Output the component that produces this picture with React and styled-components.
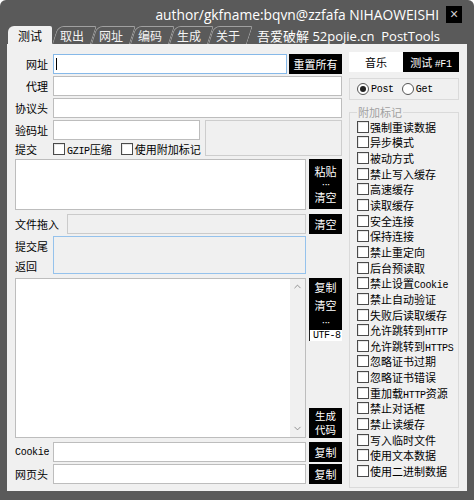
import React from 'react';
import styled, { createGlobalStyle } from 'styled-components';
import { ChevronUp, ChevronDown } from 'lucide-react';

const CJK = `"Noto Sans CJK SC", "Microsoft YaHei", sans-serif`;
const MONO = `"Liberation Mono", "Noto Sans CJK SC", monospace`;

const GlobalStyle = createGlobalStyle`
  html, body { margin: 0; padding: 0; background: #fff; }
  body { font-family: ${CJK}; font-size: 11px; color: #000; }
  * { box-sizing: border-box; }
`;

const tabs = ['测试', '取出', '网址', '编码', '生成', '关于'];

const flags = [
  '强制重读数据', '异步模式', '被动方式', '禁止写入缓存', '高速缓存', '读取缓存',
  '安全连接', '保持连接', '禁止重定向', '后台预读取', '禁止设置Cookie', '禁止自动验证',
  '失败后读取缓存', '允许跳转到HTTP', '允许跳转到HTTPS', '忽略证书过期', '忽略证书错误',
  '重加载HTTP资源', '禁止对话框', '禁止读缓存', '写入临时文件', '使用文本数据', '使用二进制数据',
];

// split ascii runs so they get the narrow bitmap-ish mono look; wrapped in one span
// so both fonts share a baseline
const mixed = (text) => (
  <span>
    {text.split(/([A-Za-z0-9#\-]+)/).filter(Boolean).map((part, i) =>
      /[A-Za-z0-9#]/.test(part) ? <Latin key={i}>{part}</Latin> : part
    )}
  </span>
);

function App() {
  return (
    <>
      <GlobalStyle />
      <Window>
        <TitleRow>
          <Title>author/gkfname:bqvn@zzfafa NIHAOWEISHI</Title>
          <Close>×</Close>
        </TitleRow>
        <TabRow>
          <Tabs>
            {tabs.map((t, i) => (
              <Tab key={t} $active={i === 0}>{t}</Tab>
            ))}
          </Tabs>
          <SubTitle>吾爱破解 52pojie.cn&nbsp;&nbsp;PostTools</SubTitle>
        </TabRow>

        <Panel>
          <LeftCol>
            <Row $cols="38px 1fr 55px" $h={20}>
              <Label $right>网址</Label>
              <Field $tone="blue"><Caret /></Field>
              <BlackBtn $ml={2}>重置所有</BlackBtn>
            </Row>
            <Row $cols="38px 1fr" $h={20} $mt={2}>
              <Label $right>代理</Label>
              <Field />
            </Row>
            <Row $cols="38px 1fr" $h={20} $mt={2}>
              <Label $right>协议头</Label>
              <Field />
            </Row>

            <CaptchaBlock>
              <Label $right>验码址</Label>
              <Field />
              <CaptchaImage />
              <Label>提交</Label>
              <Options>
                <CheckItem><Check />{mixed('GZIP压缩')}</CheckItem>
                <CheckItem><Check />使用附加标记</CheckItem>
              </Options>
            </CaptchaBlock>

            <Row $cols="1fr 36px" $h={51} $mt={1}>
              <Field />
              <BlackBtn $h={50}>
                <span>粘贴</span>
                <Dots>···</Dots>
                <span>清空</span>
              </BlackBtn>
            </Row>

            <Row $cols="52px 1fr 36px" $h={20} $mt={4}>
              <Label>文件拖入</Label>
              <Field $tone="gray" />
              <BlackBtn>清空</BlackBtn>
            </Row>

            <Row $cols="38px 1fr 36px" $h={38} $mt={2}>
              <LabelStack>
                <span>提交尾</span>
                <span>返回</span>
              </LabelStack>
              <Field $tone="blueGray" />
              <span />
            </Row>

            <Row $cols="1fr 36px" $h={160} $mt={4}>
              <Field $flex>
                <TextBody />
                <ScrollTrack>
                  <ChevronUp size={11} strokeWidth={1.6} color="#707070" />
                  <ChevronDown size={11} strokeWidth={1.6} color="#707070" />
                </ScrollTrack>
              </Field>
              <SideStack>
                <BlackBtn $h={52} $gap={4}>
                  <span>复制</span>
                  <span>清空</span>
                  <Dots>···</Dots>
                </BlackBtn>
                <Encoding>UTF-8</Encoding>
                <Spacer />
                <BlackBtn $h={30} $tight>
                  <span>生成</span>
                  <span>代码</span>
                </BlackBtn>
              </SideStack>
            </Row>

            <Row $cols="38px 1fr 36px" $h={20} $mt={4}>
              <Label><Latin>Cookie</Latin></Label>
              <Field />
              <BlackBtn>复制</BlackBtn>
            </Row>
            <Row $cols="38px 1fr 36px" $h={20} $mt={2}>
              <Label>网页头</Label>
              <Field />
              <BlackBtn>复制</BlackBtn>
            </Row>
          </LeftCol>

          <RightCol>
            <Segment>
              <SegBtn>音乐</SegBtn>
              <SegBtn $dark><span>测试 <Latin>#F1</Latin></span></SegBtn>
            </Segment>
            <RadioBox>
              <RadioItem><Radio $on /><Latin>Post</Latin></RadioItem>
              <RadioItem><Radio /><Latin>Get</Latin></RadioItem>
            </RadioBox>
            <Group>
              <Legend>附加标记</Legend>
              <FlagList>
                {flags.map((f) => (
                  <FlagItem key={f}><Check />{mixed(f)}</FlagItem>
                ))}
              </FlagList>
            </Group>
          </RightCol>
        </Panel>
      </Window>
    </>
  );
}

const Window = styled.div`
  width: 474px;
  height: 500px;
  background: #5a5a5a;
  border-radius: 6px 6px 0 0;
  display: flex;
  flex-direction: column;
  overflow: hidden;
`;

const TitleRow = styled.div`
  height: 26px;
  display: flex;
  align-items: center;
  justify-content: flex-end;
  gap: 7px;
  padding: 3px 12px 0 0;
`;

const Title = styled.div`
  font-family: "Open Sans", "Liberation Sans", sans-serif;
  font-size: 13.8px;
  color: #fff;
  white-space: nowrap;
`;

const Close = styled.div`
  width: 16px;
  height: 17px;
  background: #000;
  color: #d0d0d0;
  font-family: "Liberation Sans", sans-serif;
  font-size: 14px;
  line-height: 16px;
  text-align: center;
`;

const TabRow = styled.div`
  height: 18px;
  display: flex;
  align-items: stretch;
  justify-content: space-between;
  padding: 0 34px 0 8px;
`;

const Tabs = styled.div`
  display: flex;
  align-items: stretch;
`;

const Tab = styled.div`
  position: relative;
  z-index: ${(p) => (p.$active ? 2 : 1)};
  padding: ${(p) => (p.$active ? '1px 10px 0' : '1px 7px 0 8px')};
  display: flex;
  align-items: center;
  font-size: 12px;
  color: ${(p) => (p.$active ? '#000' : '#f4f4f4')};

  &::before {
    content: '';
    position: absolute;
    inset: 0;
    z-index: -1;
    background: ${(p) => (p.$active ? '#f0f0f0' : 'transparent')};
    border: ${(p) => (p.$active ? 'none' : '1px solid #a0a0a0')};
    border-bottom: none;
    border-radius: 6px 2px 0 0;
    transform: ${(p) => (p.$active ? 'none' : 'skewX(-18deg)')};
    transform-origin: bottom left;
  }
`;

const SubTitle = styled.div`
  align-self: center;
  font-size: 13px;
  color: #fff;
  white-space: nowrap;
  font-family: "Open Sans", ${CJK};
`;

const Panel = styled.div`
  margin: 0 7px;
  height: 447px;
  background: #f0f0f0;
  display: flex;
  gap: 7px;
  padding: 8px 8px 0 8px;
`;

const LeftCol = styled.div`
  width: 327px;
  display: flex;
  flex-direction: column;
  padding-top: 2px;
`;

const Row = styled.div`
  display: grid;
  grid-template-columns: ${(p) => p.$cols};
  height: ${(p) => p.$h}px;
  margin-top: ${(p) => p.$mt || 0}px;
  flex-shrink: 0;
`;

const Label = styled.span`
  display: flex;
  align-items: center;
  justify-content: ${(p) => (p.$right ? 'flex-end' : 'flex-start')};
  padding-right: ${(p) => (p.$right ? 5 : 0)}px;
  font-size: 11px;
  white-space: nowrap;
`;

const LabelStack = styled.div`
  display: flex;
  flex-direction: column;
  justify-content: space-between;
  padding: 3px 0 0;
  font-size: 11px;
  line-height: 15px;
`;

const tones = {
  white: 'background:#fff; border-color:#bdbdbd;',
  blue: 'background:#fff; border-color:#86b9e9;',
  gray: 'background:#f0f0f0; border-color:#cbcbcb;',
  blueGray: 'background:#f0f0f0; border-color:#95c2ec;',
};

const Field = styled.div`
  border: 1px solid;
  ${(p) => tones[p.$tone || 'white']}
  display: flex;
  align-items: center;
  min-width: 0;
  ${(p) => (p.$flex ? 'align-items: stretch;' : '')}
`;

const Caret = styled.span`
  width: 1px;
  height: 12px;
  background: #000;
  margin-left: 2px;
`;

const TextBody = styled.div`
  flex: 1;
  background: #fff;
`;

const ScrollTrack = styled.div`
  width: 15px;
  background: #f0f0f0;
  display: flex;
  flex-direction: column;
  justify-content: space-between;
  align-items: center;
  padding: 2px 0 3px;
`;

const BlackBtn = styled.div`
  margin-left: ${(p) => (p.$ml ?? 3)}px;
  height: ${(p) => (p.$h ? `${p.$h}px` : 'auto')};
  background: #000;
  color: #fff;
  display: flex;
  flex-direction: column;
  align-items: center;
  justify-content: center;
  gap: ${(p) => p.$gap || 0}px;
  font-size: ${(p) => (p.$tight ? 10.5 : 11)}px;
  line-height: 14px;
  text-align: center;
  white-space: nowrap;
`;

const Dots = styled.span`
  font-family: "Liberation Sans", sans-serif;
  font-size: 11px;
  line-height: 12px;
  letter-spacing: -1px;
`;

const SideStack = styled.div`
  display: flex;
  flex-direction: column;
`;

const Encoding = styled.div`
  margin-left: 3px;
  height: 11px;
  background: #fff;
  border-left: 1px solid #222;
  font-family: ${MONO};
  font-size: 10px;
  line-height: 11px;
  letter-spacing: -0.5px;
  padding-left: 3px;
`;

const Spacer = styled.div`
  flex: 1;
`;

const CaptchaBlock = styled.div`
  display: grid;
  grid-template-columns: 38px 147px 1fr;
  grid-template-rows: 20px 18px;
  margin-top: 2px;
  flex-shrink: 0;
`;

const CaptchaImage = styled.div`
  grid-column: 3;
  grid-row: 1 / span 2;
  margin-left: 5px;
  height: 36px;
  background: #f0f0f0;
  border: 1px solid #cdcdcd;
`;

const Options = styled.div`
  display: flex;
  align-items: center;
  gap: 9px;
  white-space: nowrap;
`;

const CheckItem = styled.label`
  display: flex;
  align-items: center;
  gap: 2px;
  font-size: 11px;
`;

const Check = styled.span`
  width: 12px;
  height: 12px;
  flex-shrink: 0;
  background: #fff;
  border: 1px solid #4a4a4a;
  box-shadow: inset 1px 1px 0 #e6e6e6;
`;

const Latin = styled.span`
  font-family: ${MONO};
  font-size: 10px;
  letter-spacing: -0.3px;
`;

const RightCol = styled.div`
  width: 110px;
  display: flex;
  flex-direction: column;
`;

const Segment = styled.div`
  display: flex;
  height: 20px;
`;

const SegBtn = styled.div`
  width: ${(p) => (p.$dark ? 56 : 54)}px;
  background: ${(p) => (p.$dark ? '#000' : '#fff')};
  color: ${(p) => (p.$dark ? '#fff' : '#000')};
  display: flex;
  align-items: center;
  justify-content: center;
  font-size: 11px;
  white-space: nowrap;
`;

const RadioBox = styled.div`
  margin-top: 6px;
  height: 22px;
  border: 1px solid #dadada;
  display: flex;
  align-items: center;
  gap: 8px;
  padding-left: 7px;
`;

const RadioItem = styled.label`
  display: flex;
  align-items: center;
  gap: 2px;
`;

const Radio = styled.span`
  width: 12px;
  height: 12px;
  border-radius: 50%;
  border: 1px solid #555;
  background: #fff;
  display: flex;
  align-items: center;
  justify-content: center;

  &::after {
    content: '';
    width: 6px;
    height: 6px;
    border-radius: 50%;
    background: ${(p) => (p.$on ? '#222' : 'transparent')};
  }
`;

const Group = styled.fieldset`
  margin: 6px 0 0;
  padding: 0 0 0 7px;
  border: 1px solid #dadada;
  height: 382px;
  min-width: 0;
`;

const Legend = styled.legend`
  padding: 0 1px;
  color: #a0a0a0;
  font-size: 11px;
  line-height: 12px;
`;

const FlagList = styled.div`
  display: flex;
  flex-direction: column;
  padding-top: 1px;
`;

const FlagItem = styled.div`
  height: 15.65px;
  display: flex;
  align-items: center;
  gap: 1px;
  font-size: 11px;
  white-space: nowrap;
`;

export default App;
